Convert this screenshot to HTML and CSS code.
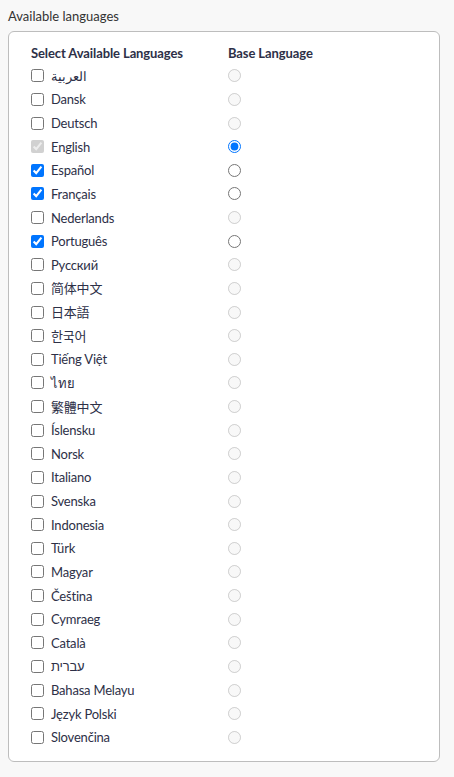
FILE: index.html
```html
<!DOCTYPE html>
<html>
<head>
<meta charset="utf-8">
<link rel="stylesheet" href="styles.css">
</head>
<body>
<div class="title">Available languages</div>
<div class="box">
  <div class="row head">
    <div>Select Available Languages</div>
    <div>Base Language</div>
  </div>
  <div class="row"><label class="lang"><input type="checkbox"><span dir="rtl">العربية</span></label><input type="radio" name="b" disabled></div>
  <div class="row"><label class="lang"><input type="checkbox"><span>Dansk</span></label><input type="radio" name="b" disabled></div>
  <div class="row"><label class="lang"><input type="checkbox"><span>Deutsch</span></label><input type="radio" name="b" disabled></div>
  <div class="row"><label class="lang"><input type="checkbox" checked disabled><span>English</span></label><input type="radio" name="b" checked></div>
  <div class="row"><label class="lang"><input type="checkbox" checked><span>Español</span></label><input type="radio" name="b"></div>
  <div class="row"><label class="lang"><input type="checkbox" checked><span>Français</span></label><input type="radio" name="b"></div>
  <div class="row"><label class="lang"><input type="checkbox"><span>Nederlands</span></label><input type="radio" name="b" disabled></div>
  <div class="row"><label class="lang"><input type="checkbox" checked><span>Português</span></label><input type="radio" name="b"></div>
  <div class="row"><label class="lang"><input type="checkbox"><span>Русский</span></label><input type="radio" name="b" disabled></div>
  <div class="row"><label class="lang"><input type="checkbox"><span>简体中文</span></label><input type="radio" name="b" disabled></div>
  <div class="row"><label class="lang"><input type="checkbox"><span>日本語</span></label><input type="radio" name="b" disabled></div>
  <div class="row"><label class="lang"><input type="checkbox"><span>한국어</span></label><input type="radio" name="b" disabled></div>
  <div class="row"><label class="lang"><input type="checkbox"><span>Tiếng Việt</span></label><input type="radio" name="b" disabled></div>
  <div class="row"><label class="lang"><input type="checkbox"><span>ไทย</span></label><input type="radio" name="b" disabled></div>
  <div class="row"><label class="lang"><input type="checkbox"><span>繁體中文</span></label><input type="radio" name="b" disabled></div>
  <div class="row"><label class="lang"><input type="checkbox"><span>Íslensku</span></label><input type="radio" name="b" disabled></div>
  <div class="row"><label class="lang"><input type="checkbox"><span>Norsk</span></label><input type="radio" name="b" disabled></div>
  <div class="row"><label class="lang"><input type="checkbox"><span>Italiano</span></label><input type="radio" name="b" disabled></div>
  <div class="row"><label class="lang"><input type="checkbox"><span>Svenska</span></label><input type="radio" name="b" disabled></div>
  <div class="row"><label class="lang"><input type="checkbox"><span>Indonesia</span></label><input type="radio" name="b" disabled></div>
  <div class="row"><label class="lang"><input type="checkbox"><span>Türk</span></label><input type="radio" name="b" disabled></div>
  <div class="row"><label class="lang"><input type="checkbox"><span>Magyar</span></label><input type="radio" name="b" disabled></div>
  <div class="row"><label class="lang"><input type="checkbox"><span>Čeština</span></label><input type="radio" name="b" disabled></div>
  <div class="row"><label class="lang"><input type="checkbox"><span>Cymraeg</span></label><input type="radio" name="b" disabled></div>
  <div class="row"><label class="lang"><input type="checkbox"><span>Català</span></label><input type="radio" name="b" disabled></div>
  <div class="row"><label class="lang"><input type="checkbox"><span dir="rtl">עברית</span></label><input type="radio" name="b" disabled></div>
  <div class="row"><label class="lang"><input type="checkbox"><span>Bahasa Melayu</span></label><input type="radio" name="b" disabled></div>
  <div class="row"><label class="lang"><input type="checkbox"><span>Język Polski</span></label><input type="radio" name="b" disabled></div>
  <div class="row"><label class="lang"><input type="checkbox"><span>Slovenčina</span></label><input type="radio" name="b" disabled></div>
</div>
</body>
</html>
```

FILE: styles.css
```css
html, body {
  margin: 0;
  padding: 0;
  background: #f8f8f8;
}
body {
  font-family: Lato, "Noto Sans", "Noto Sans CJK SC", sans-serif;
  color: #2d3047;
}
.title {
  margin: 8px 0 0 8px;
  font-size: 13px;
  line-height: 17px;
  color: #333333;
}
.box {
  box-sizing: border-box;
  margin: 6px 0 0 8px;
  width: 432px;
  border: 1px solid #bdbdbd;
  border-radius: 6px;
  background: #ffffff;
  padding: 13px 0 12px 22px;
}
.row {
  display: grid;
  grid-template-columns: 197px 1fr;
  align-items: center;
  height: 23.625px;
  font-size: 13px;
  letter-spacing: -0.2px;
}
.row.head {
  height: 17px;
  line-height: 17px;
  margin-bottom: 2px;
  font-weight: 700;
  letter-spacing: -0.1px;
}
.lang {
  display: flex;
  align-items: center;
}
.lang input {
  margin: 0 7px 0 0;
  width: 13px;
  height: 13px;
}
.lang span {
  line-height: 16px;
}
.row > input[type="radio"] {
  margin: 0;
  width: 13px;
  height: 13px;
}
```
